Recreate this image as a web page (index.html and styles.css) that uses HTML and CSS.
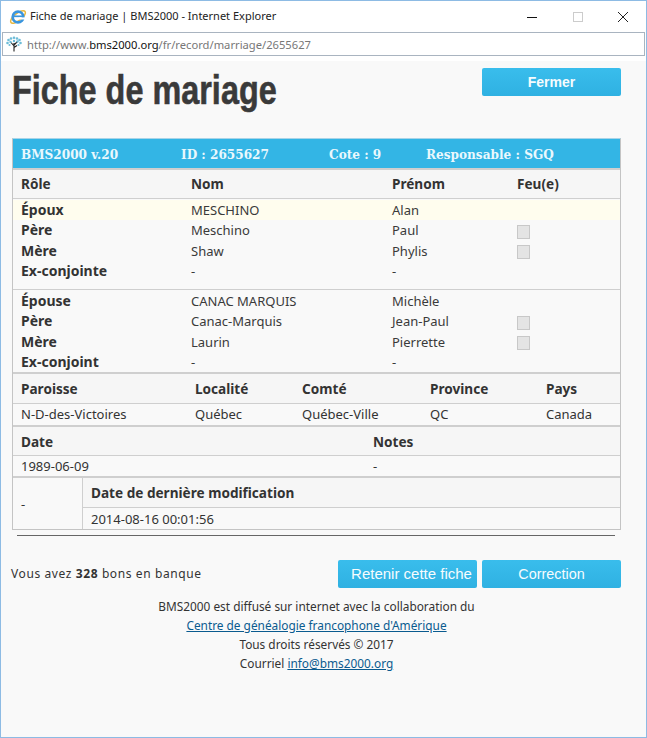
FILE: index.html
```html
<!DOCTYPE html>
<html lang="fr">
<head>
<meta charset="utf-8">
<title>Fiche de mariage</title>
<link rel="stylesheet" href="styles.css">
</head>
<body>
<div class="window">
  <div class="titlebar">
    <svg class="ie" viewBox="0 0 18 18"><ellipse cx="9" cy="9" rx="9" ry="3.600" transform="rotate(-38 9 9)" fill="none" stroke="#e9b83f" stroke-width="1.500"/><circle cx="9" cy="9" r="5.300" fill="none" stroke="#3a95de" stroke-width="2.700"/><path d="M4 8.300h10" stroke="#3a95de" stroke-width="1.700"/><rect x="10.200" y="9.400" width="6" height="2.100" fill="#fff"/></svg>
    <span class="wintitle">Fiche de mariage | BMS2000 - Internet Explorer</span>
    <div class="controls">
      <svg class="ctl" viewBox="0 0 12 12"><path d="M1 6.500h10" stroke="#111" stroke-width="1"/></svg>
      <svg class="ctl" viewBox="0 0 12 12"><rect x="1.500" y="1.500" width="9" height="9" fill="none" stroke="#ccc"/></svg>
      <svg class="ctl" viewBox="0 0 12 12"><path d="M1 1l10 10M11 1L1 11" stroke="#222" stroke-width="1"/></svg>
    </div>
  </div>
  <div class="addressbar">
    <svg class="tree" viewBox="0 0 16 16"><path d="M8 15.500V7M8 10L5 6.500M8 9l3.500-3.500M8 11.500l3-2" stroke="#222" stroke-width="1.100" fill="none"/><g fill="#6dbcd8"><circle cx="2.500" cy="4" r="1.300"/><circle cx="5" cy="2.500" r="1.300"/><circle cx="8" cy="1.800" r="1.300"/><circle cx="11" cy="2.500" r="1.300"/><circle cx="13.500" cy="4" r="1.300"/><circle cx="14.500" cy="7" r="1.300"/><circle cx="1.500" cy="7" r="1.300"/><circle cx="4.500" cy="6" r="1.200"/><circle cx="11.500" cy="5.500" r="1.200"/><circle cx="8" cy="5" r="1.200"/><circle cx="12.500" cy="9" r="1.100"/><circle cx="3.500" cy="9" r="1.100"/></g></svg>
    <span class="url">http://www.<b>bms2000.org</b>/fr/record/marriage/2655627</span>
  </div>
  <main class="content">
    <div class="top">
      <h1 class="heading">Fiche de mariage</h1>
      <a class="btn btn-bold">Fermer</a>
    </div>

    <div class="sheet">
      <div class="banner">
        <span class="b1">BMS2000 v.20</span>
        <span class="b2">ID : 2655627</span>
        <span class="b3">Cote : 9</span>
        <span>Responsable : SGQ</span>
      </div>

      <div class="grid people head"><b>Rôle</b><b>Nom</b><b>Prénom</b><b>Feu(e)</b></div>
      <div class="group first">
        <div class="grid people row hl"><b>Époux</b><span>MESCHINO</span><span>Alan</span><span></span></div>
        <div class="grid people row"><b>Père</b><span>Meschino</span><span>Paul</span><i class="check"></i></div>
        <div class="grid people row"><b>Mère</b><span>Shaw</span><span>Phylis</span><i class="check"></i></div>
        <div class="grid people row"><b>Ex-conjointe</b><span>-</span><span>-</span><span></span></div>
      </div>
      <div class="group second">
        <div class="grid people row"><b>Épouse</b><span>CANAC MARQUIS</span><span>Michèle</span><span></span></div>
        <div class="grid people row"><b>Père</b><span>Canac-Marquis</span><span>Jean-Paul</span><i class="check"></i></div>
        <div class="grid people row"><b>Mère</b><span>Laurin</span><span>Pierrette</span><i class="check"></i></div>
        <div class="grid people row"><b>Ex-conjoint</b><span>-</span><span>-</span><span></span></div>
      </div>

      <div class="grid place head thick"><b>Paroisse</b><b>Localité</b><b>Comté</b><b>Province</b><b>Pays</b></div>
      <div class="grid place data"><span>N-D-des-Victoires</span><span>Québec</span><span>Québec-Ville</span><span>QC</span><span>Canada</span></div>

      <div class="grid dates head"><b>Date</b><b>Notes</b></div>
      <div class="grid dates data short"><span>1989-06-09</span><span>-</span></div>

      <div class="modified">
        <div class="mod-left">-</div>
        <div class="mod-right">
          <div class="head mod-head"><b>Date de dernière modification</b></div>
          <div class="data mod-data">2014-08-16 00:01:56</div>
        </div>
      </div>
    </div>

    <hr class="rule">

    <div class="actions">
      <span class="bank">Vous avez <b>328</b> bons en banque</span>
      <div class="btns">
        <a class="btn btn-wide">Retenir cette fiche</a>
        <a class="btn btn-plain">Correction</a>
      </div>
    </div>

    <footer class="foot">
      <div>BMS2000 est diffusé sur internet avec la collaboration du</div>
      <div><a href="#">Centre de généalogie francophone d'Amérique</a></div>
      <div>Tous droits réservés © 2017</div>
      <div>Courriel <a href="#">info@bms2000.org</a></div>
    </footer>
  </main>
</div>
</body>
</html>
```
FILE: styles.css
```css
* { box-sizing: border-box; }
html, body { margin: 0; height: 100%; }
body { font-family: "Noto Sans", "DejaVu Sans", sans-serif; font-size: 13px; color: #333; background: #fff; }
.window { width: 647px; height: 738px; border: 1px solid #8dbbe4; display: flex; flex-direction: column; background: #fff; overflow: hidden; }
.titlebar { height: 31px; display: flex; align-items: center; padding-left: 8px; flex: none; }
.ie { width: 18px; height: 18px; }
.wintitle { margin-left: 3px; padding-bottom: 2px; font-size: 11px; color: #222; }
.controls { margin-left: auto; display: flex; gap: 33.500px; padding-right: 17px; }
.ctl { width: 12px; height: 12px; display: block; }
.addressbar { height: 24px; margin: 0 1px 0 1px; border: 1px solid #a9b4c0; display: flex; align-items: center; padding-left: 3px; flex: none; }
.tree { width: 16px; height: 16px; }
.url { margin-left: 5px; font-size: 11.200px; color: #777; }
.url b { font-weight: 400; color: #111; }
.content { flex: 1; margin-top: 5px; background: #f9f9f9; padding: 7px 25px 0 11px; }
.top { display: flex; justify-content: space-between; align-items: flex-start; height: 70px; }
.heading { margin: 2px 0 0; font-family: "Liberation Sans", sans-serif; font-weight: 700; font-size: 40px; line-height: 40px; color: #3a3a3a; transform: scaleX(.81); transform-origin: left; -webkit-text-stroke: .6px #3a3a3a; white-space: nowrap; }
.btn { display: flex; align-items: center; justify-content: center; width: 139px; height: 28px; background: linear-gradient(#39bdec, #2fb1e2); border-radius: 2px; color: #f6fcfe; font-family: "Liberation Sans", sans-serif; font-size: 14px; }
.btn-bold { font-weight: 700; }
.btn-wide { font-size: 15px; padding-left: 8px; padding-bottom: 2px; }
.btn-plain { font-size: 14.400px; }
.sheet { width: 609px; border: 1px solid #c4c4c4; border-top-color: #a8d4e8; }
.banner { height: 29px; background: #33b5e5; color: #eaf8fd; font-weight: 700; font-family: "DejaVu Serif", "Noto Sans", serif; font-size: 12.100px; display: flex; align-items: center; padding-left: 8px; padding-top: 2px; }
.b1 { width: 160px; } .b2 { width: 148px; } .b3 { width: 97px; }
.grid { display: grid; padding-left: 8px; align-items: center; }
.people { grid-template-columns: 170px 201px 125px 1fr; }
.people.head { padding-bottom: 2px; }
.place { grid-template-columns: 174px 107px 128px 116px 1fr; }
.dates { grid-template-columns: 352px 1fr; }
.head { background: #f6f6f6; border-top: 2px solid #cfcfcf; height: 31px; border-bottom: 1px solid #cfcfcf; }
.head b { font-size: 13.600px; color: #333; }
.row b { font-size: 14px; color: #333; }
.thick { height: 32px; }
.group { padding-top: .5px; }
.first { height: 90px; }
.row.row { height: 20.500px; align-items: baseline; line-height: 20.500px; }
.row span { color: #3a3a3a; }
.hl { background: #fffdee; }
.second { border-top: 1px solid #cfcfcf; height: 83px; }
.check { width: 13px; height: 14px; margin-top: 3px; align-self: center; background: #e4e4e4; border: 1px solid #c8c8c8; display: block; }
.data { height: 21px; }
.place.data { padding-bottom: 1px; }
.short { height: 20px; }
.modified { display: flex; border-top: 2px solid #cfcfcf; height: 53px; }
.mod-left { width: 70px; padding-left: 8px; border-right: 1px solid #cfcfcf; display: flex; align-items: center; }
.mod-right { flex: 1; }
.mod-head { border-top: 0; height: 30px; padding-left: 8px; display: flex; align-items: center; }
.mod-data { padding-left: 8px; display: flex; align-items: center; }
.rule { margin: 5px 5px 0; width: 598px; border: 0; border-top: 1px solid #666; }
.actions { display: flex; justify-content: space-between; align-items: center; width: 609px; margin-top: 24px; }
.bank { font-size: 12px; letter-spacing: .6px; margin-left: -1px; padding-bottom: 2px; }
.btns { display: flex; gap: 5px; }
.foot { width: 609px; margin-top: 9px; text-align: center; font-size: 11.850px; line-height: 19px; }
.foot a { color: #0a5b8f; text-decoration: underline; }
```
